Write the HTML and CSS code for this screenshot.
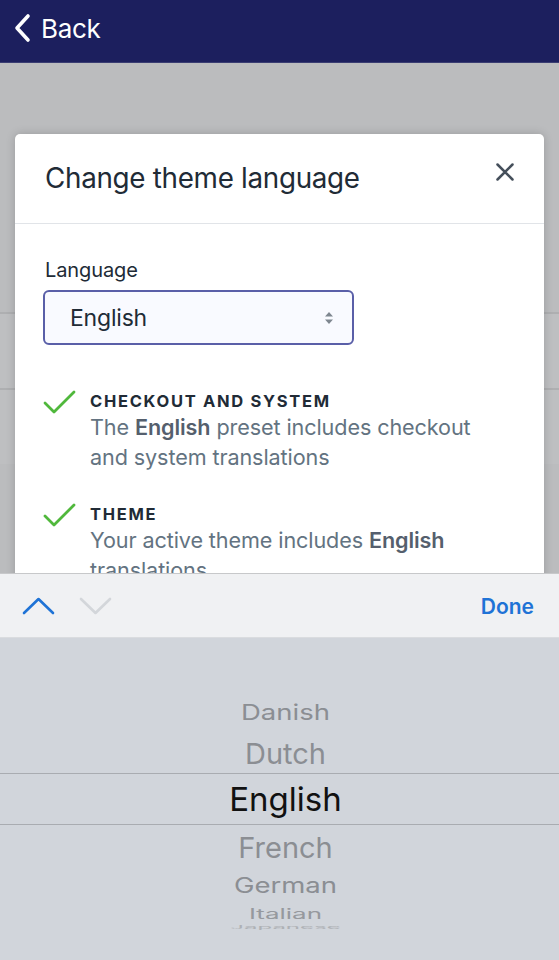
FILE: index.html
```html
<!DOCTYPE html>
<html>
<head>
<meta charset="utf-8">
<link rel="stylesheet" href="styles.css">
</head>
<body>
<div class="screen">
  <header class="nav">
    <svg class="back-chev" width="18" height="30" viewBox="0 0 18 30"><path d="M15 3 L4 15 L15 27" fill="none" stroke="#fff" stroke-width="3.6" stroke-linecap="round" stroke-linejoin="round"/></svg>
    <span class="back-text">Back</span>
  </header>
  <main class="stage">
    <div class="bg-page">
      <div class="bg-top"></div>
      <div class="bg-row"></div>
      <div class="bg-row"></div>
    </div>
    <section class="modal">
      <div class="modal-head">
        <h1 class="modal-title">Change theme language</h1>
        <svg class="close" width="18" height="18" viewBox="0 0 18 18"><path d="M1.5 1.5 L16.5 16.5 M16.5 1.5 L1.5 16.5" stroke="#454f5b" stroke-width="2.5" stroke-linecap="round"/></svg>
      </div>
      <div class="modal-body">
        <div class="label">Language</div>
        <div class="select">
          <span class="select-value">English</span>
          <svg class="select-arrows" width="10" height="16" viewBox="0 0 10 16"><path d="M5 2 L9 6.5 H1 Z M5 14 L9 9.5 H1 Z" fill="#7f8790"/></svg>
        </div>
        <div class="item">
          <svg class="check" width="34" height="26" viewBox="0 0 34 26"><path d="M2 14 L11 23 L31 3" fill="none" stroke="#50b83c" stroke-width="2.8" stroke-linecap="round" stroke-linejoin="round"/></svg>
          <div class="item-text">
            <div class="subheading">Checkout and system</div>
            <p class="desc">The <b>English</b> preset includes checkout and system translations</p>
          </div>
        </div>
        <div class="item">
          <svg class="check" width="34" height="26" viewBox="0 0 34 26"><path d="M2 14 L11 23 L31 3" fill="none" stroke="#50b83c" stroke-width="2.8" stroke-linecap="round" stroke-linejoin="round"/></svg>
          <div class="item-text">
            <div class="subheading">Theme</div>
            <p class="desc">Your active theme includes <b>English</b> translations</p>
          </div>
        </div>
      </div>
    </section>
  </main>
  <div class="toolbar">
    <div class="arrows">
      <svg width="33" height="18" viewBox="0 0 33 18"><path d="M2 16 L16.5 2 L31 16" fill="none" stroke="#1f73d6" stroke-width="2.6" stroke-linecap="round" stroke-linejoin="round"/></svg>
      <svg width="33" height="18" viewBox="0 0 33 18"><path d="M2 2 L16.5 16 L31 2" fill="none" stroke="#d3d6da" stroke-width="2.6" stroke-linecap="round" stroke-linejoin="round"/></svg>
    </div>
    <span class="done">Done</span>
  </div>
  <div class="picker">
    <div class="wheel">
      <div class="opt o-danish"><span>Danish</span></div>
      <div class="opt o-dutch"><span>Dutch</span></div>
      <div class="opt o-english"><span>English</span></div>
      <div class="opt o-french"><span>French</span></div>
      <div class="opt o-german"><span>German</span></div>
      <div class="opt o-italian"><span>Italian</span></div>
      <div class="opt o-last"><span>Japanese</span></div>
    </div>
  </div>
</div>
</body>
</html>
```
FILE: styles.css
```css
* { box-sizing: border-box; }
html, body { margin: 0; padding: 0; }
body {
  font-family: Inter, "Noto Sans", "Liberation Sans", sans-serif;
  background: #d1d5db;
}
.screen {
  width: 559px;
  height: 960px;
  overflow: hidden;
  display: flex;
  flex-direction: column;
}
.nav {
  height: 63px;
  flex: none;
  background: #1c1f5e;
  border-bottom: 1px solid #3a3d72;
  display: flex;
  align-items: center;
  padding-left: 13px;
  gap: 10px;
}
.back-chev { margin-top: -6px; }
.back-text {
  color: #fff;
  font-size: 26px;
  margin-top: -6px;
  letter-spacing: -0.3px;
}
.stage {
  position: relative;
  height: 510px;
  flex: none;
  background: #bbbcbe;
  overflow: hidden;
}
.bg-page { display: flex; flex-direction: column; }
.bg-top { height: 249px; }
.bg-row {
  height: 76px;
  border-top: 2px solid #aeafb1;
  background: #bebfc1;
}
.modal {
  position: absolute;
  top: 71px;
  left: 15px;
  width: 529px;
  height: 520px;
  background: #fff;
  border-radius: 5px;
  box-shadow: 0 0 10px rgba(0,0,0,0.18);
}
.modal-head {
  height: 90px;
  border-bottom: 1px solid #e1e4e8;
  display: flex;
  align-items: center;
  justify-content: space-between;
  padding: 0 30px 2px 30px;
}
.modal-title {
  margin: 0;
  font-weight: 400;
  font-size: 27.8px;
  color: #212b36;
  letter-spacing: -0.3px;
}
.close { margin-top: -12px; }
.modal-body {
  padding: 32px 30px 0 28px;
}
.label {
  font-size: 20px;
  color: #212b36;
  padding-left: 2px;
  line-height: 28px;
  letter-spacing: -0.1px;
}
.select {
  margin-top: 6px;
  width: 311px;
  height: 55px;
  border: 2px solid #5a5fa8;
  border-radius: 6px;
  background: #f9faff;
  display: flex;
  align-items: center;
  justify-content: space-between;
  padding: 0 18px 0 25px;
}
.select-value {
  font-size: 23px;
  color: #212b36;
  letter-spacing: -0.2px;
}
.item {
  display: flex;
  gap: 13px;
  margin-top: 45px;
}
.item + .item { margin-top: 31px; }
.check { flex: none; margin-top: -1px; }
.item-text { flex: 0 1 400px; }
.subheading {
  text-transform: uppercase;
  font-weight: 700;
  font-size: 16.5px;
  letter-spacing: 1.7px;
  color: #212b36;
  line-height: 22px;
}
.desc {
  margin: 1px 0 0;
  font-size: 21.6px;
  line-height: 29.5px;
  color: #637381;
  letter-spacing: -0.1px;
}
.desc b { color: #555f6d; font-weight: 600; }
.toolbar {
  height: 65px;
  flex: none;
  background: #f0f1f3;
  border-top: 1px solid #c7c8ca;
  border-bottom: 1px solid #dadcdf;
  display: flex;
  align-items: center;
  justify-content: space-between;
  padding: 0 25px 0 22px;
}
.arrows { display: flex; gap: 24px; align-items: center; margin-top: 0; }
.done {
  color: #1f73d6;
  font-weight: 600;
  font-size: 21px;
  margin-top: 2px;
}
.picker {
  flex: 1;
  background: #d1d5db;
  padding-top: 55px;
}
.wheel {
  display: flex;
  flex-direction: column;
  align-items: stretch;
}
.opt {
  color: #8b8e93;
  display: flex;
  align-items: center;
  justify-content: center;
  padding-left: 12px;
  line-height: 1;
}
.opt span { display: block; }
.o-danish { font-size: 27.5px; height: 40px; }
.o-danish span { transform: scaleY(0.78); }
.o-dutch { font-size: 29px; height: 40px; }
.o-english {
  font-size: 33px;
  color: #111;
  height: 52px;
  border-top: 1px solid #a9acb1;
  border-bottom: 1px solid #a9acb1;
}
.o-french { font-size: 29px; height: 42px; padding-top: 2px; }
.o-german { font-size: 27.5px; height: 38px; }
.o-german span { transform: scaleY(0.76); }
.o-italian { font-size: 26px; height: 18px; color: #96999e; }
.o-italian span { transform: scaleY(0.55); }
.o-last { font-size: 24px; height: 8px; color: #aeb1b5; }
.o-last span { transform: scaleY(0.2); }
```
